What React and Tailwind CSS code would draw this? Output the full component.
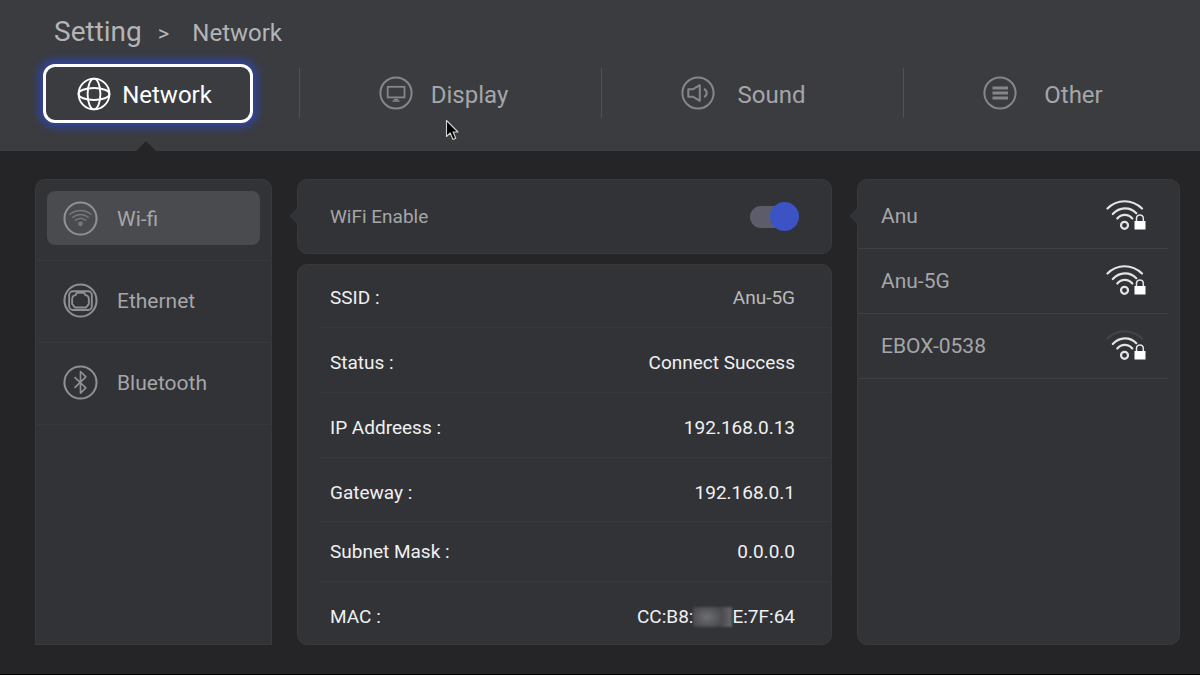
import React, { useState } from "react";

const ring = (
  <circle cx="17" cy="17" r="15.6" fill="none" stroke="currentColor" strokeWidth="2" />
);

function GlobeIcon() {
  return (
    <svg viewBox="0 0 34 34" className="size-[34px] shrink-0" fill="none" stroke="currentColor" strokeWidth="1.9" aria-hidden="true">
      <circle cx="17" cy="17" r="15.4" />
      <ellipse cx="17" cy="17" rx="15.4" ry="6" />
      <ellipse cx="17" cy="17" rx="6.400" ry="15.4" />
    </svg>
  );
}

function DisplayIcon() {
  return (
    <svg viewBox="0 0 34 34" className="size-[34px] shrink-0" fill="none" stroke="currentColor" strokeWidth="1.8" aria-hidden="true">
      {ring}
      <rect x="8.7" y="10.8" width="16.8" height="10.6" />
      <path d="M15 23.4h4.2M13.6 25h7" strokeWidth="1.4" />
    </svg>
  );
}

function SoundIcon() {
  return (
    <svg viewBox="0 0 34 34" className="size-[34px] shrink-0" fill="none" stroke="currentColor" strokeWidth="2" aria-hidden="true">
      {ring}
      <path d="M7.3 13.2h4.9l6.6-4v15.6l-6.6-4H7.3z" strokeLinejoin="round" />
      <path d="M23 13c3.600 1.500 3.600 6.500 0 8" />
    </svg>
  );
}

function OtherIcon() {
  return (
    <svg viewBox="0 0 34 34" className="size-[34px] shrink-0" fill="none" stroke="currentColor" aria-hidden="true">
      {ring}
      <path d="M9.500 12h15.500M9.500 17h15.500M9.500 22h15.500" strokeWidth="3.200" />
    </svg>
  );
}

function WifiIcon() {
  return (
    <svg viewBox="0 0 34 34" className="size-[35px] shrink-0" fill="none" stroke="currentColor" aria-hidden="true">
      {ring}
      <g strokeWidth="1.4" strokeLinecap="round" opacity="0.65">
        <path d="M6.800 12.800C12.500 8 21.500 8 27.200 12.800" />
        <path d="M9.500 15.800c4.300-3.600 10.700-3.600 15 0" />
        <path d="M12 18.700c2.900-2.400 7.100-2.400 10 0" />
        <circle cx="17" cy="22.200" r="1.600" fill="currentColor" />
      </g>
    </svg>
  );
}

function EthernetIcon() {
  return (
    <svg viewBox="0 0 34 34" className="size-[35px] shrink-0" fill="none" stroke="currentColor" strokeWidth="1.800" strokeLinejoin="round" aria-hidden="true">
      {ring}
      <rect x="6" y="8" width="22" height="18.200" rx="3.600" />
      <path d="M13.300 9.600h7.400l1 2.200c2.400.400 3.400 1.700 3.400 4v4.500l-2.600 3.500h-11l-2.600-3.500v-4.500c0-2.300 1-3.600 3.400-4z" />
    </svg>
  );
}

function BluetoothIcon() {
  return (
    <svg viewBox="0 0 34 34" className="size-[35px] shrink-0" fill="none" stroke="currentColor" strokeWidth="1.600" strokeLinejoin="round" aria-hidden="true">
      {ring}
      <path d="M11.200 11.800l11 10.400-5.200 5.200V6.300l5.200 5.300-11 10.600" />
    </svg>
  );
}

function SignalIcon({ weak }) {
  return (
    <svg viewBox="0 0 40 32" className="h-8 w-10 shrink-0" fill="none" stroke="currentColor" strokeWidth="2.200" strokeLinecap="round" aria-hidden="true">
      <path d="M1.500 8.500C11 -1.200 26 -1.200 36 8.500" opacity={weak ? 0.1 : 1} />
      <path d="M6.800 14C13.500 6.600 24 6.600 30.300 13.200" />
      <path d="M11.300 18.500c4.200-4.800 10.800-4.800 15 0" />
      <circle cx="18.500" cy="25.300" r="3.500" />
      <path d="M30.500 21.500v-3.200a3.400 3.400 0 0 1 6.800 0v3.200" strokeWidth="1.500" />
      <rect x="28.500" y="21" width="11" height="8.500" fill="#fff" stroke="none" />
    </svg>
  );
}

function Notch() {
  return (
    <svg viewBox="0 0 9 18" className="absolute -left-[9px] top-[27px] h-[18px] w-[9px] text-[#323337]" aria-hidden="true">
      <path d="M9 0L0 9l9 9z" fill="currentColor" />
    </svg>
  );
}

const tabs = [
  { name: "Display", Icon: DisplayIcon },
  { name: "Sound", Icon: SoundIcon },
  { name: "Other", Icon: OtherIcon },
];

const sections = [
  { name: "Wi-fi", Icon: WifiIcon },
  { name: "Ethernet", Icon: EthernetIcon },
  { name: "Bluetooth", Icon: BluetoothIcon },
];

const details = [
  { label: "SSID :", value: "Anu-5G", row: "h-[63px] pt-[21px]", tone: "text-[#b9babc]" },
  { label: "Status :", value: "Connect Success", row: "h-[65px] pt-[23px]", tone: "text-[#f0f0f1]" },
  { label: "IP Addreess :", value: "192.168.0.13", row: "h-[65px] pt-[23px]", tone: "text-[#f0f0f1]" },
  { label: "Gateway :", value: "192.168.0.1", row: "h-16 pt-[23px]", tone: "text-[#f0f0f1]" },
  { label: "Subnet Mask :", value: "0.0.0.0", row: "h-[60px] pt-[18px]", tone: "text-[#f0f0f1]" },
];

const networks = [
  { name: "Anu" },
  { name: "Anu-5G" },
  { name: "EBOX-0538", weak: true },
];

const card = "rounded-[10px] border border-[#39393c] bg-[#323337]";

export default function App() {
  const [enabled, setEnabled] = useState(true);

  return (
    <div className="relative flex min-h-screen flex-col border-b border-black bg-[#252527] font-['Roboto','Liberation_Sans',sans-serif] text-[#a5a6a8]">
      <header className="relative bg-[#3b3c40] pb-7">
        <nav aria-label="Breadcrumb" className="flex h-16 items-baseline pl-[54px] pt-[13px] text-[#b3b4b6]">
          <a href="#setting" className="text-[28px] leading-[38px]">Setting</a>
          <span className="ml-4 text-[22px]">&gt;</span>
          <a href="#network" className="ml-[23px] text-2xl">Network</a>
        </nav>
        <nav aria-label="Settings" className="grid grid-cols-[299fr_302fr_302fr_297fr] text-2xl">
          <div className="pl-[43px]">
            <button type="button" aria-current="page" className="flex h-[59px] w-[210px] items-center rounded-xl border-3 border-white pl-[31px] text-white shadow-[0_0_8px_4px_#2f44a8]">
              <GlobeIcon />
              <span className="mt-0.5 w-28 text-center">Network</span>
            </button>
          </div>
          {tabs.map(({ name, Icon }) => (
            <div key={name} className="mt-1 h-[50px] border-l border-[#505155]">
              <button type="button" className="flex h-full w-full items-center pl-[79px]">
                <span className="text-[#85868a]"><Icon /></span>
                <span className="mt-1 w-[113px] text-center">{name}</span>
              </button>
            </div>
          ))}
        </nav>
        <svg viewBox="0 0 20 10" className="absolute bottom-0 left-[136px] h-[10px] w-5 text-[#252527]" aria-hidden="true">
          <path d="M0 10L10 0l10 10z" fill="currentColor" />
        </svg>
      </header>

      <main className="grid flex-1 grid-cols-[237fr_535fr_323fr] gap-[25px] pb-[29px] pl-[35px] pr-5 pt-7">
        <aside className="rounded-t-[10px] bg-[#323337] text-[21px] inset-ring inset-ring-[#39393c]">
          <ul>
            {sections.map(({ name, Icon }, i) => (
              <li key={name} className="h-[82px] border-b border-[#38383c] px-3 pt-3">
                <button
                  type="button"
                  className={
                    i === 0
                      ? "flex h-[54px] w-full items-center gap-[19px] rounded-lg bg-[#4a4b4f] pl-4"
                      : "flex h-[54px] w-full items-center gap-[19px] pl-4"
                  }
                >
                  <span className="text-[#8f9093]"><Icon /></span>
                  <span className="mt-1">{name}</span>
                </button>
              </li>
            ))}
          </ul>
        </aside>

        <section className="flex flex-col gap-[10px] text-[19px] leading-6">
          <div className={`relative flex h-[75px] items-center justify-between px-8 ${card}`}>
            <Notch />
            <label htmlFor="wifi-enable">WiFi Enable</label>
            <input
              id="wifi-enable"
              type="checkbox"
              role="switch"
              checked={enabled}
              onChange={(e) => setEnabled(e.target.checked)}
              className="flex h-[29px] w-[49px] appearance-none items-center before:h-[22px] before:w-9 before:rounded-full before:bg-[#5c5c6a] after:-ml-9 after:size-[29px] after:rounded-full after:bg-[#8b8c90] checked:after:-ml-4 checked:after:bg-[#3c53c5]"
            />
          </div>
          <dl className={`flex-1 ${card}`}>
            {details.map(({ label, value, row, tone }) => (
              <div key={label} className={`ml-[22px] flex items-start justify-between border-b border-[#38383c] pl-[10px] pr-9 ${row}`}>
                <dt className="text-[#f0f0f1]">{label}</dt>
                <dd className={tone}>{value}</dd>
              </div>
            ))}
            <div className="ml-[22px] flex justify-between pl-[10px] pr-9 pt-[23px] text-[#f0f0f1]">
              <dt>MAC :</dt>
              <dd className="flex items-center">
                CC:B8:
                <span className="flex h-5 w-[39px] blur-[1px]">
                  <span className="h-full w-7 bg-radial from-[#707073] to-[#424347]" />
                  <span className="h-full w-[11px] bg-linear-to-r from-[#48494d] to-[#68686b]" />
                </span>
                E:7F:64
              </dd>
            </div>
          </dl>
        </section>

        <section aria-label="Available networks" className={`relative pt-1 text-[21px] ${card}`}>
          <Notch />
          <ul>
            {networks.map(({ name, weak }) => (
              <li key={name} className="mr-[10px] h-[65px] border-b border-[#3e3f43]">
                <button type="button" className="flex h-full w-full items-center justify-between pl-[23px] pr-[23px]">
                  <span className="mt-0.5">{name}</span>
                  <span className="text-[#e4e4e5]"><SignalIcon weak={weak} /></span>
                </button>
              </li>
            ))}
          </ul>
        </section>
      </main>

      <svg viewBox="0 0 14 22" className="absolute left-[445px] top-[119px] h-[22px] w-[14px]" aria-hidden="true">
        <path d="M1.500 1.500v16l3.700-3.500 2.700 6.400 2.900-1.200-2.700-6.200h4.900z" fill="#000" stroke="#d4d4d4" strokeWidth="1.100" strokeLinejoin="round" />
      </svg>
    </div>
  );
}
